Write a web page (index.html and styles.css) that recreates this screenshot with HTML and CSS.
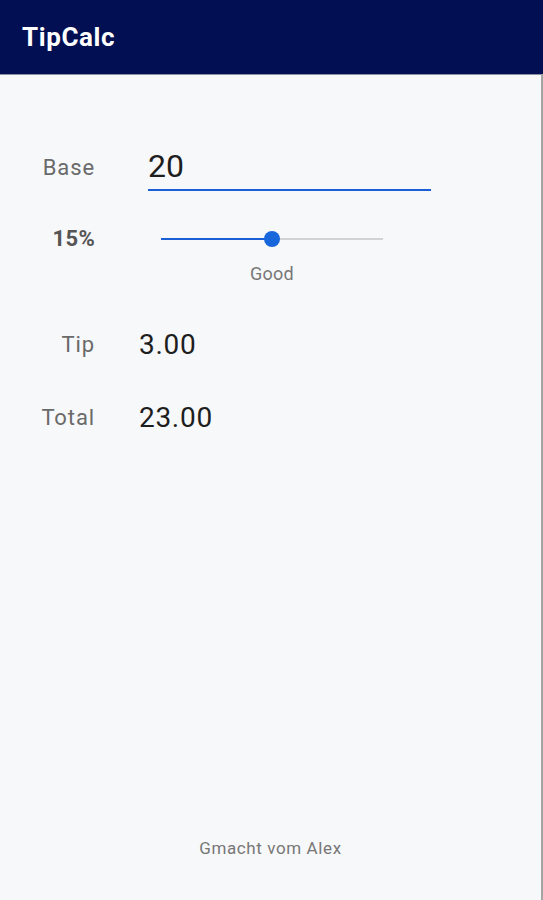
FILE: index.html
```html
<!DOCTYPE html>
<html lang="en">
<head>
  <meta charset="UTF-8" />
  <meta name="viewport" content="width=device-width, initial-scale=1.0"/>
  <title>TipCalc</title>
  <link rel="stylesheet" href="styles.css">
</head>
<body>
  <div class="app">
    <!-- Toolbar -->
    <header class="topbar">
      <h1 class="title">TipCalc</h1>
    </header>

    <main class="content">
      <div class="row row-base">
        <label class="label" for="base-input">Base</label>
        <input class="amount" id="base-input" type="text" value="20"/>
      </div>

      <div class="row row-pct">
        <span class="label label-bold">15%</span>
        <div class="slider">
          <div class="track"></div>
          <div class="track-fill" style="width: 50%;"></div>
          <div class="thumb" style="left: 50%;"></div>
        </div>
      </div>
      <div class="caption">Good</div>

      <div class="row row-result">
        <span class="label">Tip</span>
        <span class="value">3.00</span>
      </div>
      <div class="row row-result row-total">
        <span class="label">Total</span>
        <span class="value">23.00</span>
      </div>

      <footer class="footer">Gmacht vom Alex</footer>
    </main>
  </div>
</body>
</html>
```

FILE: styles.css
```css
/* Page base */
body {
  margin: 0;
  font-family: Roboto, "Noto Sans", sans-serif;
  background-color: #f7f8fa;
}

.app {
  display: flex;
  flex-direction: column;
  height: 100vh;
}

/* Dark blue toolbar */
.topbar {
  height: 74px;
  background-color: #030f53;
  box-shadow: 0 1px 0 #8c90a0;
  padding-left: 22px;
  flex-shrink: 0;
}

.title {
  margin: 0;
  color: #ffffff;
  font-size: 26px;
  font-weight: 700;
  line-height: 74px;
  letter-spacing: 0.6px;
}

.content {
  flex: 1;
  display: flex;
  flex-direction: column;
  padding-top: 71px;
  border-right: 2px solid #a4a4a4;
}

.row {
  display: flex;
  align-items: center;
}

.label {
  width: 95px;
  text-align: right;
  font-size: 22px;
  line-height: 26px;
  letter-spacing: 0.9px;
  color: #6a6a6a;
  flex-shrink: 0;
}

.label-bold {
  font-weight: 700;
  letter-spacing: 0.3px;
  color: #555555;
}

/* Base input with underline */
.amount {
  margin-left: 53px;
  width: 283px;
  padding: 0 0 2px 0;
  border: none;
  border-bottom: 2px solid #1a5fd6;
  background: transparent;
  font-family: Roboto, sans-serif;
  font-size: 32px;
  line-height: 40px;
  height: 42px;
  color: #1e1e1e;
  outline: none;
}

/* Percentage slider */
.row-pct {
  margin-top: 35px;
}

.slider {
  position: relative;
  margin-left: 66px;
  width: 222px;
  height: 16px;
}

.track,
.track-fill {
  position: absolute;
  left: 0;
  top: 7px;
  height: 2px;
}

.track {
  width: 100%;
  background-color: #d2d2d2;
}

.track-fill {
  background-color: #1a5fd6;
}

.thumb {
  position: absolute;
  top: 0;
  width: 16px;
  height: 16px;
  margin-left: -8px;
  border-radius: 50%;
  background-color: #1866db;
}

.caption {
  margin-top: 11px;
  margin-left: 161px;
  width: 222px;
  text-align: center;
  font-size: 18px;
  line-height: 22px;
  letter-spacing: 0.3px;
  color: #777777;
}

/* Results */
.row-result {
  margin-top: 43px;
}

.row-total {
  margin-top: 39px;
}

.value {
  margin-left: 44px;
  font-size: 28px;
  line-height: 34px;
  letter-spacing: 0.7px;
  color: #1e1e1e;
}

.footer {
  margin-top: auto;
  padding-bottom: 42px;
  text-align: center;
  font-size: 17px;
  line-height: 20px;
  letter-spacing: 0.6px;
  color: #777777;
}
```
